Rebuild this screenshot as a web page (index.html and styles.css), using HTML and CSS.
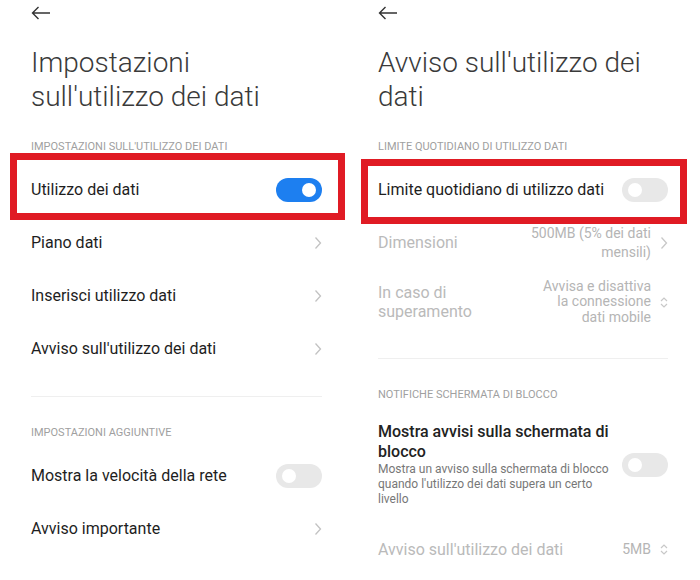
FILE: index.html
```html
<!DOCTYPE html>
<html lang="it">
<head>
    <meta charset="UTF-8">
    <meta name="viewport" content="width=device-width, initial-scale=1.0">
    <title>Utilizzo dei dati</title>
    <link rel="stylesheet" href="styles.css">
</head>
<body>
<div class="screens">

    <!-- schermata 1 -->
    <section class="screen">
        <div class="topbar">
            <svg class="back" viewBox="0 0 20 14"><path d="M19 7H1.5M7.5 1L1.5 7l6 6" fill="none" stroke="#333" stroke-width="1.4"/></svg>
        </div>
        <h1 class="title">Impostazioni<br>sull'utilizzo dei dati</h1>

        <div class="group-label">IMPOSTAZIONI SULL'UTILIZZO DEI DATI</div>
        <div class="row marked">
            <span>Utilizzo dei dati</span>
            <span class="switch on"></span>
        </div>
        <div class="row">
            <span>Piano dati</span>
            <svg class="chevron" viewBox="0 0 8 14"><path d="M1.5 1.5L6.5 7l-5 5.5" fill="none" stroke="#c2c2c2" stroke-width="1.3"/></svg>
        </div>
        <div class="row">
            <span>Inserisci utilizzo dati</span>
            <svg class="chevron" viewBox="0 0 8 14"><path d="M1.5 1.5L6.5 7l-5 5.5" fill="none" stroke="#c2c2c2" stroke-width="1.3"/></svg>
        </div>
        <div class="row">
            <span>Avviso sull'utilizzo dei dati</span>
            <svg class="chevron" viewBox="0 0 8 14"><path d="M1.5 1.5L6.5 7l-5 5.5" fill="none" stroke="#c2c2c2" stroke-width="1.3"/></svg>
        </div>

        <div class="divider"></div>

        <div class="group-label">IMPOSTAZIONI AGGIUNTIVE</div>
        <div class="row">
            <span>Mostra la velocità della rete</span>
            <span class="switch"></span>
        </div>
        <div class="row">
            <span>Avviso importante</span>
            <svg class="chevron" viewBox="0 0 8 14"><path d="M1.5 1.5L6.5 7l-5 5.5" fill="none" stroke="#c2c2c2" stroke-width="1.3"/></svg>
        </div>
    </section>

    <!-- schermata 2 -->
    <section class="screen alert">
        <div class="topbar">
            <svg class="back" viewBox="0 0 20 14"><path d="M19 7H1.5M7.5 1L1.5 7l6 6" fill="none" stroke="#333" stroke-width="1.4"/></svg>
        </div>
        <h1 class="title">Avviso sull'utilizzo dei<br>dati</h1>

        <div class="group-label">LIMITE QUOTIDIANO DI UTILIZZO DATI</div>
        <div class="row marked">
            <span>Limite quotidiano di utilizzo dati</span>
            <span class="switch"></span>
        </div>
        <div class="row disabled">
            <span>Dimensioni</span>
            <span class="value">
                <span class="value-text wide">500MB (5% dei dati<br>mensili)</span>
                <svg class="chevron" viewBox="0 0 8 14"><path d="M1.5 1.5L6.5 7l-5 5.5" fill="none" stroke="#c8c8c8" stroke-width="1.3"/></svg>
            </span>
        </div>
        <div class="row disabled tall">
            <span class="two-line">In caso di<br>superamento</span>
            <span class="value">
                <span class="value-text">Avvisa e disattiva<br>la connessione<br>dati mobile</span>
                <svg class="updown" viewBox="0 0 8 13"><path d="M1 5l3-3 3 3M1 8l3 3 3-3" fill="none" stroke="#c8c8c8" stroke-width="1.2"/></svg>
            </span>
        </div>

        <div class="divider"></div>

        <div class="group-label">NOTIFICHE SCHERMATA DI BLOCCO</div>
        <div class="row multi">
            <div class="text">
                <div class="name">Mostra avvisi sulla schermata di blocco</div>
                <div class="desc">Mostra un avviso sulla schermata di blocco quando l'utilizzo dei dati supera un certo livello</div>
            </div>
            <span class="switch"></span>
        </div>
        <div class="row disabled">
            <span>Avviso sull'utilizzo dei dati</span>
            <span class="value">
                <span class="value-text">5MB</span>
                <svg class="updown" viewBox="0 0 8 13"><path d="M1 5l3-3 3 3M1 8l3 3 3-3" fill="none" stroke="#c8c8c8" stroke-width="1.2"/></svg>
            </span>
        </div>
    </section>

</div>
</body>
</html>
```

FILE: styles.css
```css
body {
    margin: 0;
    background: #fff;
    color: #1e1e1e;
    font-family: Roboto, "Noto Sans", sans-serif;
}

.screens {
    display: flex;
}

.screen {
    width: 350px;
    flex: none;
    box-sizing: border-box;
    padding: 0 28px 0 31px;
}

.screen.alert {
    padding: 0 32px 0 28px;
}

.topbar {
    height: 26px;
    display: flex;
    align-items: center;
}

.back {
    width: 20px;
    height: 14px;
}

.title {
    margin: 20px 0 0;
    font-size: 28px;
    font-weight: 300;
    line-height: 34px;
    color: #3a3a3a;
}

.group-label {
    margin: 26px 0 9px;
    font-size: 11px;
    line-height: 14px;
    color: #a0a0a0;
}

.divider {
    height: 1px;
    background: #efefef;
    margin-top: 21px;
}

.alert .divider {
    margin-top: 23px;
}

.divider + .group-label {
    margin-top: 29px;
}

.row {
    position: relative;
    height: 53px;
    display: flex;
    align-items: center;
    justify-content: space-between;
    font-size: 16px;
}

.row.tall {
    height: 66px;
}

.row.disabled {
    color: #bababa;
}

.two-line {
    line-height: 19px;
}

/* riquadro rosso sopra la riga */
.row.marked::before {
    content: "";
    position: absolute;
    top: -10px;
    bottom: -4px;
    left: -21px;
    right: -23px;
    border: 7px solid #e01b24;
}

.alert .row.marked::before {
    top: -4px;
    bottom: -8px;
    left: -17px;
    right: -19px;
}

.value {
    display: flex;
    align-items: center;
    gap: 9px;
}

.value-text {
    text-align: right;
    font-size: 14px;
    line-height: 15.5px;
    color: #b5b5b5;
}

.value-text.wide {
    line-height: 19px;
}

.chevron {
    width: 8px;
    height: 14px;
    flex: none;
}

.updown {
    width: 8px;
    height: 13px;
    flex: none;
}

.switch {
    position: relative;
    width: 46px;
    height: 24px;
    border-radius: 12px;
    background: #e8e8e8;
    flex: none;
}

.switch::after {
    content: "";
    position: absolute;
    top: 5px;
    left: 6px;
    width: 14px;
    height: 14px;
    border-radius: 50%;
    background: #fff;
}

.switch.on {
    background: #1d7ff0;
}

.switch.on::after {
    left: 26px;
}

.row.multi {
    height: auto;
    padding: 11px 0 16px;
}

.multi .text {
    max-width: 240px;
}

.multi .name {
    font-size: 16px;
    line-height: 20px;
    font-weight: 500;
    color: #222;
}

.multi .desc {
    font-size: 12px;
    line-height: 15px;
    color: #777;
}
```
